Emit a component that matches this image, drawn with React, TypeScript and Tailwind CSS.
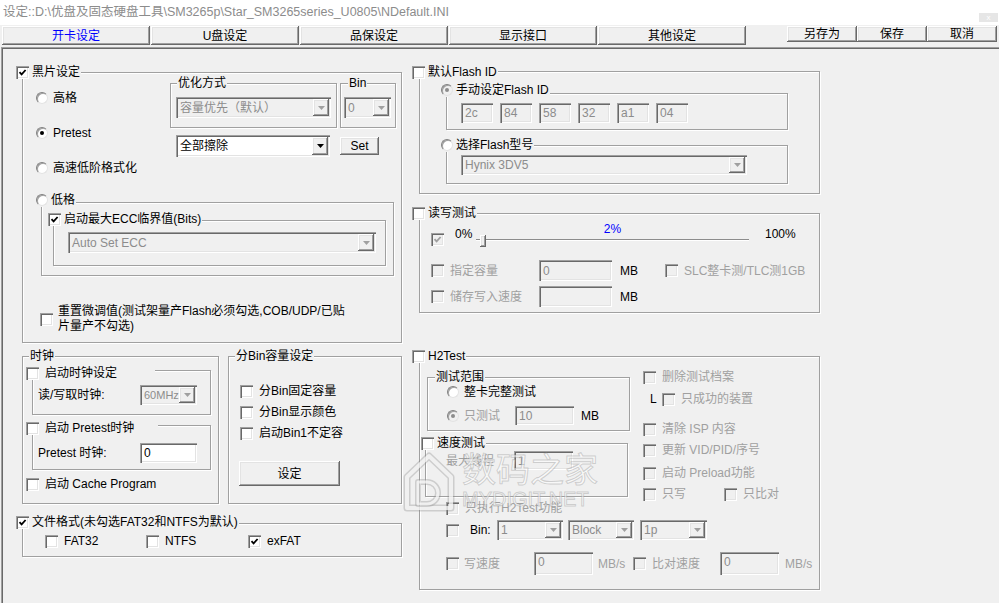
import type { ReactNode } from "react"

// classic win32 bevels
const raised =
    "bg-[#f0f0f0] shadow-[inset_-1px_-1px_0_#696969,inset_1px_1px_0_#ffffff,inset_-2px_-2px_0_#a0a0a0,inset_2px_2px_0_#e3e3e3]"
const sunken =
    "shadow-[inset_1px_1px_0_#a0a0a0,inset_2px_2px_0_#696969,inset_-1px_-1px_0_#ffffff,inset_-2px_-2px_0_#e3e3e3]"
const etched =
    "border border-[#a0a0a0] shadow-[1px_1px_0_#ffffff,inset_1px_1px_0_#ffffff]"
const dim = "text-[#a0a0a0]"

function Check({ on = false, off = false }: { on?: boolean; off?: boolean }) {
    return (
        <span
            className={`flex h-[13px] w-[13px] shrink-0 items-center justify-center ${off ? "bg-[#f0f0f0]" : "bg-white"} ${sunken}`}
        >
            {on && (
                <svg width="9" height="9" viewBox="0 0 9 9">
                    <path
                        d="M1.5 4.2 L3.6 6.4 L7.6 2"
                        fill="none"
                        stroke={off ? "#a0a0a0" : "#000"}
                        strokeWidth="1.8"
                    />
                </svg>
            )}
        </span>
    )
}

function Radio({ on = false, off = false }: { on?: boolean; off?: boolean }) {
    return (
        <span
            className={`flex h-[12px] w-[12px] shrink-0 items-center justify-center rounded-full border border-t-[#808080] border-l-[#808080] border-r-[#e3e3e3] border-b-[#e3e3e3] shadow-[inset_1px_1px_0_#a0a0a0] ${off ? "bg-[#f0f0f0]" : "bg-white"}`}
        >
            {on && (
                <span
                    className={`h-[4px] w-[4px] rounded-full ${off ? "bg-[#8c8c8c]" : "bg-black"}`}
                />
            )}
        </span>
    )
}

function CheckItem({
    label,
    on,
    off,
    className = "",
}: {
    label: ReactNode
    on?: boolean
    off?: boolean
    className?: string
}) {
    return (
        <div className={`flex h-[14px] items-center gap-[6px] whitespace-nowrap ${className}`}>
            <Check on={on} off={off} />
            <span className={off ? dim : ""}>{label}</span>
        </div>
    )
}

function RadioItem({ label, on, off }: { label: string; on?: boolean; off?: boolean }) {
    return (
        <div className="flex h-[14px] items-center gap-[5px] whitespace-nowrap">
            <Radio on={on} off={off} />
            <span className={off ? dim : ""}>{label}</span>
        </div>
    )
}

function Field({
    className = "",
    value = "",
    white = false,
}: {
    className?: string
    value?: string
    white?: boolean
}) {
    return (
        <div
            className={`flex shrink-0 items-center px-[4px] ${white ? "bg-white text-black" : "bg-[#f0f0f0] text-[#8c8c8c]"} ${sunken} ${className}`}
        >
            {value}
        </div>
    )
}

function Combo({
    className = "",
    value,
    off = true,
}: {
    className?: string
    value: string
    off?: boolean
}) {
    return (
        <div
            className={`flex shrink-0 p-[2px] ${off ? "bg-[#f0f0f0] text-[#8c8c8c]" : "bg-white text-black"} ${sunken} ${className}`}
        >
            <span className="flex flex-1 items-center overflow-hidden whitespace-nowrap pl-[2px]">
                {value}
            </span>
            <span className={`flex w-[16px] shrink-0 items-center justify-center ${raised}`}>
                <svg width="7" height="4" viewBox="0 0 7 4">
                    <path d="M0 0 H7 L3.5 4 Z" fill={off ? "#a0a0a0" : "#000"} />
                </svg>
            </span>
        </div>
    )
}

function Group({
    className = "",
    legend,
    at = "-top-[8px] left-[6px]",
    children,
}: {
    className?: string
    legend?: ReactNode
    at?: string
    children?: ReactNode
}) {
    return (
        <div className={`relative shrink-0 ${etched} ${className}`}>
            {legend && (
                <div
                    className={`absolute flex h-[14px] items-center whitespace-nowrap bg-[#f0f0f0] ${at}`}
                >
                    {legend}
                </div>
            )}
            {children}
        </div>
    )
}

function Legend({ text }: { text: string }) {
    return <span className="px-[1px]">{text}</span>
}

function CheckLegend({ text, on }: { text: string; on?: boolean }) {
    return (
        <span className="flex items-center gap-[3px] pr-[1px]">
            <Check on={on} />
            <span>{text}</span>
        </span>
    )
}

function RadioLegend({ text, on, off }: { text: string; on?: boolean; off?: boolean }) {
    return (
        <span className="flex items-center gap-[3px] pr-[1px]">
            <Radio on={on} off={off} />
            <span>{text}</span>
        </span>
    )
}

function Button({ className = "", children }: { className?: string; children: ReactNode }) {
    return (
        <div className={`flex shrink-0 items-center justify-center ${raised} ${className}`}>
            {children}
        </div>
    )
}

const tabs = ["开卡设定", "U盘设定", "品保设定", "显示接口", "其他设定"]
const flashId = ["2c", "84", "58", "32", "a1", "04"]

function LeftColumn() {
    return (
        <div className="flex w-[380px] shrink-0 flex-col">
            <Group
                className="mt-[1px] h-[271px] w-[380px]"
                at="-top-[8px] left-[-7px]"
                legend={<CheckLegend text="黑片设定" on />}
            >
                <div className="mt-[10px] flex h-[92px]">
                    <div className="ml-[13px] flex w-[134px] flex-col gap-[21px] pt-[8px]">
                        <RadioItem label="高格" />
                        <RadioItem label="Pretest" on />
                        <RadioItem label="高速低阶格式化" />
                    </div>
                    <div className="flex flex-col">
                        <div className="flex">
                            <Group className="h-[45px] w-[167px]" legend={<Legend text="优化方式" />}>
                                <Combo
                                    className="ml-[5px] mt-[13px] h-[21px] w-[155px]"
                                    value="容量优先（默认）"
                                />
                            </Group>
                            <Group
                                className="ml-[3px] h-[45px] w-[56px]"
                                at="-top-[8px] left-[7px]"
                                legend={<Legend text="Bin" />}
                            >
                                <Combo className="ml-[3px] mt-[13px] h-[21px] w-[47px]" value="0" />
                            </Group>
                        </div>
                        <div className="mt-[7px] flex items-start">
                            <Combo className="ml-[6px] h-[22px] w-[154px]" value="全部擦除" off={false} />
                            <Button className="ml-[10px] mt-[2px] h-[18px] w-[39px]">Set</Button>
                        </div>
                    </div>
                </div>

                <Group
                    className="ml-[18px] mt-[27px] h-[74px] w-[353px]"
                    at="-top-[10px] left-[-6px]"
                    legend={<RadioLegend text="低格" />}
                >
                    <Group
                        className="ml-[11px] mt-[17px] h-[46px] w-[333px]"
                        at="-top-[9px] left-[-6px]"
                        legend={<CheckLegend text="启动最大ECC临界值(Bits)" on />}
                    >
                        <Combo className="ml-[14px] mt-[11px] h-[21px] w-[308px]" value="Auto Set ECC" />
                    </Group>
                </Group>

                <div className="ml-[17px] mt-[28px] flex items-center gap-[5px]">
                    <Check />
                    <span className="leading-[15px] whitespace-nowrap">
                        重置微调值(测试架量产Flash必须勾选,COB/UDP/已贴
                        <br />
                        片量产不勾选)
                    </span>
                </div>
            </Group>

            <div className="mt-[13px] flex h-[148px]">
                <Group className="h-[148px] w-[197px]" legend={<Legend text="时钟" />}>
                    <Group
                        className="ml-[9px] mt-[13px] h-[45px] w-[179px]"
                        at="-top-[5px] left-[-7px]"
                        legend={
                            <span className="flex w-[129px] items-center gap-[6px]">
                                <Check />
                                <span>启动时钟设定</span>
                            </span>
                        }
                    >
                        <div className="mt-[14px] flex h-[20px] items-center">
                            <span className="w-[107px] pl-[5px]">读/写取时钟:</span>
                            <Combo className="h-[20px] w-[57px] text-[11px]" value="60MHz" />
                        </div>
                    </Group>
                    <Group
                        className="ml-[9px] mt-[10px] h-[45px] w-[179px]"
                        at="-top-[5px] left-[-7px]"
                        legend={
                            <span className="flex w-[132px] items-center gap-[6px]">
                                <Check />
                                <span>启动 Pretest时钟</span>
                            </span>
                        }
                    >
                        <div className="mt-[17px] flex h-[20px] items-center">
                            <span className="w-[107px] pl-[5px]">Pretest 时钟:</span>
                            <Field className="h-[20px] w-[57px]" value="0" white />
                        </div>
                    </Group>
                    <CheckItem className="ml-[3px] mt-[7px]" label="启动 Cache Program" />
                </Group>

                <Group className="ml-[9px] h-[148px] w-[174px]" legend={<Legend text="分Bin容量设定" />}>
                    <div className="ml-[11px] mt-[27px] flex flex-col gap-[7px]">
                        <CheckItem label="分Bin固定容量" />
                        <CheckItem label="分Bin显示颜色" />
                        <CheckItem label="启动Bin1不定容" />
                    </div>
                    <Button className="ml-[10px] mt-[21px] h-[25px] w-[101px]">设定</Button>
                </Group>
            </div>

            <Group
                className="mt-[19px] h-[34px] w-[380px]"
                at="-top-[9px] left-[-7px]"
                legend={<CheckLegend text="文件格式(未勾选FAT32和NTFS为默认)" on />}
            >
                <div className="ml-[22px] mt-[10px] flex">
                    <CheckItem className="w-[101px]" label="FAT32" />
                    <CheckItem className="w-[102px]" label="NTFS" />
                    <CheckItem label="exFAT" on />
                </div>
            </Group>
        </div>
    )
}

function RightColumn() {
    return (
        <div className="flex w-[401px] shrink-0 flex-col">
            <Group
                className="h-[123px] w-[401px]"
                at="-top-[7px] left-[-8px]"
                legend={<CheckLegend text="默认Flash ID" />}
            >
                <Group
                    className="ml-[26px] mt-[21px] h-[37px] w-[342px]"
                    at="-top-[11px] left-[-6px]"
                    legend={<RadioLegend text="手动设定Flash ID" on off />}
                >
                    <div className="ml-[14px] mt-[9px] flex gap-[7px]">
                        {flashId.map((v) => (
                            <Field key={v} className="h-[20px] w-[32px]" value={v} />
                        ))}
                    </div>
                </Group>
                <Group
                    className="ml-[26px] mt-[15px] h-[39px] w-[342px]"
                    at="-top-[8px] left-[-6px]"
                    legend={<RadioLegend text="选择Flash型号" />}
                >
                    <Combo className="ml-[14px] mt-[9px] h-[20px] w-[286px]" value="Hynix 3DV5" />
                </Group>
            </Group>

            <Group
                className="mt-[19px] h-[100px] w-[401px]"
                at="-top-[8px] left-[-8px]"
                legend={<CheckLegend text="读写测试" />}
            >
                <div className="ml-[11px] mt-[12px] flex h-[20px] items-start">
                    <span className="mt-[7px]">
                        <Check on off />
                    </span>
                    <span className="ml-[11px] mt-[1px] w-[21px]">0%</span>
                    <div className="-mt-[4px] flex w-[273px] flex-col items-center">
                        <span className="text-[#0000ff]">2%</span>
                        <div className="relative h-[10px] w-full">
                            <div className="absolute left-0 right-0 top-[3px] h-[2px] border-t border-b border-t-[#8c8c8c] border-b-white" />
                            <div className={`absolute left-[4px] top-[-1px] h-[12px] w-[6px] ${raised}`} />
                        </div>
                    </div>
                    <span className="ml-[16px] mt-[1px]">100%</span>
                </div>
                <div className="ml-[11px] mt-[14px] flex h-[21px] items-center">
                    <Check off />
                    <span className={`ml-[6px] w-[89px] ${dim}`}>指定容量</span>
                    <Field className="h-[21px] w-[73px]" value="0" />
                    <span className="ml-[8px] w-[45px]">MB</span>
                    <Check off />
                    <span className={`ml-[6px] whitespace-nowrap ${dim}`}>SLC整卡测/TLC测1GB</span>
                </div>
                <div className="ml-[11px] mt-[5px] flex h-[21px] items-center">
                    <Check off />
                    <span className={`ml-[6px] w-[89px] ${dim}`}>储存写入速度</span>
                    <Field className="h-[21px] w-[73px]" />
                    <span className="ml-[8px]">MB</span>
                </div>
            </Group>

            <Group
                className="mt-[43px] h-[234px] w-[401px]"
                at="-top-[8px] left-[-8px]"
                legend={<CheckLegend text="H2Test" />}
            >
                <div className="flex h-[144px]">
                    <div className="flex w-[223px] shrink-0 flex-col">
                        <Group
                            className="ml-[7px] mt-[20px] h-[54px] w-[203px]"
                            at="-top-[8px] left-[7px]"
                            legend={<Legend text="测试范围" />}
                        >
                            <div className="ml-[19px] mt-[7px]">
                                <RadioItem label="整卡完整测试" />
                            </div>
                            <div className="ml-[19px] mt-[7px] flex h-[19px] items-center">
                                <Radio on off />
                                <span className={`ml-[5px] w-[51px] ${dim}`}>只测试</span>
                                <Field className="h-[19px] w-[59px]" value="10" />
                                <span className="ml-[7px]">MB</span>
                            </div>
                        </Group>
                        <Group
                            className="ml-[5px] mt-[12px] h-[54px] w-[203px]"
                            at="-top-[8px] left-[-5px]"
                            legend={<CheckLegend text="速度测试" />}
                        >
                            <div className="mt-[7px] flex h-[19px] items-center">
                                <span className={`w-[88px] pl-[20px] ${dim}`}>最大线程</span>
                                <Field className="h-[19px] w-[59px]" value="1" />
                            </div>
                        </Group>
                    </div>
                    <div className="flex flex-col">
                        <CheckItem className="mt-[13px]" label="删除测试档案" off />
                        <div className="mt-[8px] flex h-[14px] items-center pl-[7px]">
                            <span className="w-[12px]">L</span>
                            <CheckItem label="只成功的装置" off />
                        </div>
                        <CheckItem className="mt-[16px]" label="清除 ISP 内容" off />
                        <CheckItem className="mt-[7px]" label="更新 VID/PID/序号" off />
                        <CheckItem className="mt-[9px]" label="启动 Preload功能" off />
                        <div className="mt-[7px] flex">
                            <CheckItem className="w-[81px]" label="只写" off />
                            <CheckItem label="只比对" off />
                        </div>
                    </div>
                </div>
                <CheckItem className="ml-[26px]" label="只执行H2Test功能" off />
                <div className="ml-[26px] mt-[5px] flex h-[20px] items-center">
                    <Check off />
                    <span className="w-[38px] pl-[11px]">Bin:</span>
                    <Combo className="h-[20px] w-[66px]" value="1" />
                    <Combo className="ml-[5px] h-[20px] w-[66px]" value="Block" />
                    <Combo className="ml-[6px] h-[20px] w-[67px]" value="1p" />
                </div>
                <div className="ml-[26px] mt-[12px] flex h-[23px] items-center">
                    <Check off />
                    <span className={`ml-[5px] w-[70px] ${dim}`}>写速度</span>
                    <Field className="h-[23px] w-[59px] items-start pt-[3px]" value="0" />
                    <span className={`ml-[5px] w-[35px] ${dim}`}>MB/s</span>
                    <Check off />
                    <span className={`ml-[6px] w-[68px] ${dim}`}>比对速度</span>
                    <Field className="h-[23px] w-[59px] items-start pt-[3px]" value="0" />
                    <span className={`ml-[6px] ${dim}`}>MB/s</span>
                </div>
            </Group>
        </div>
    )
}

function Watermark() {
    return (
        <div className="pointer-events-none absolute left-[403px] top-[447px] flex items-start">
            <svg width="52" height="62" viewBox="0 0 52 62" className="mt-[4px]">
                <g fill="none" strokeLinejoin="round">
                    <path d="M4 26 L26 5 L48 26 V57 H4 Z" stroke="rgba(140,140,140,0.35)" strokeWidth="7" />
                    <path d="M4 26 L26 5 L48 26 V57 H4 Z" stroke="rgba(255,255,255,0.7)" strokeWidth="4" />
                    <path d="M15 31 H24 A11 11 0 0 1 24 53 H15 Z" stroke="rgba(140,140,140,0.35)" strokeWidth="6" />
                    <path d="M15 31 H24 A11 11 0 0 1 24 53 H15 Z" stroke="rgba(255,255,255,0.7)" strokeWidth="3" />
                </g>
            </svg>
            <div className="ml-[7px] flex flex-col font-['Noto_Sans_CJK_SC',sans-serif] text-[rgba(255,255,255,0.6)] [-webkit-text-stroke:1px_rgba(130,130,130,0.35)]">
                <span className="text-[34px] leading-[42px]">数码之家</span>
                <span className="font-['Liberation_Sans',sans-serif] text-[20px] leading-[20px]">MYDIGIT.NET</span>
            </div>
        </div>
    )
}

export default function App() {
    return (
        <div className="relative h-[603px] w-[999px] overflow-hidden bg-[#f0f0f0] font-['Liberation_Sans','Noto_Sans_CJK_SC',sans-serif] text-[12px] leading-[14px] text-black">
            <div className="flex h-[25px] items-start justify-between bg-white">
                <span className="mt-[5px] whitespace-nowrap pl-[3px] text-[12.5px] leading-[15px] text-[#8c8c8c]">
                    {"设定::D:\\优盘及固态硬盘工具\\SM3265p\\Star_SM3265series_U0805\\NDefault.INI"}
                </span>
                <span className="mr-[1px] mt-[13px] flex h-[9px] w-[19px] items-center justify-center bg-[#e6e6e6] text-[8px] leading-none text-white">
                    x
                </span>
            </div>

            <div className="flex h-[22px] items-start px-[2px] pt-[1px]">
                <div className="flex gap-[1px]">
                    {tabs.map((t, i) => (
                        <Button
                            key={t}
                            className={`h-[19px] w-[148px] ${i === 0 ? "text-[#0000ff]" : ""}`}
                        >
                            {t}
                        </Button>
                    ))}
                </div>
                <div className="ml-auto flex">
                    {["另存为", "保存", "取消"].map((b) => (
                        <Button key={b} className="h-[16px] w-[70px]">
                            {b}
                        </Button>
                    ))}
                </div>
            </div>

            <div className="ml-[1px] flex h-[556px] gap-[17px] pl-[21px] pt-[24px] shadow-[inset_1px_1px_0_#a0a0a0,inset_2px_2px_0_#696969]">
                <LeftColumn />
                <RightColumn />
            </div>

            <Watermark />
        </div>
    )
}
